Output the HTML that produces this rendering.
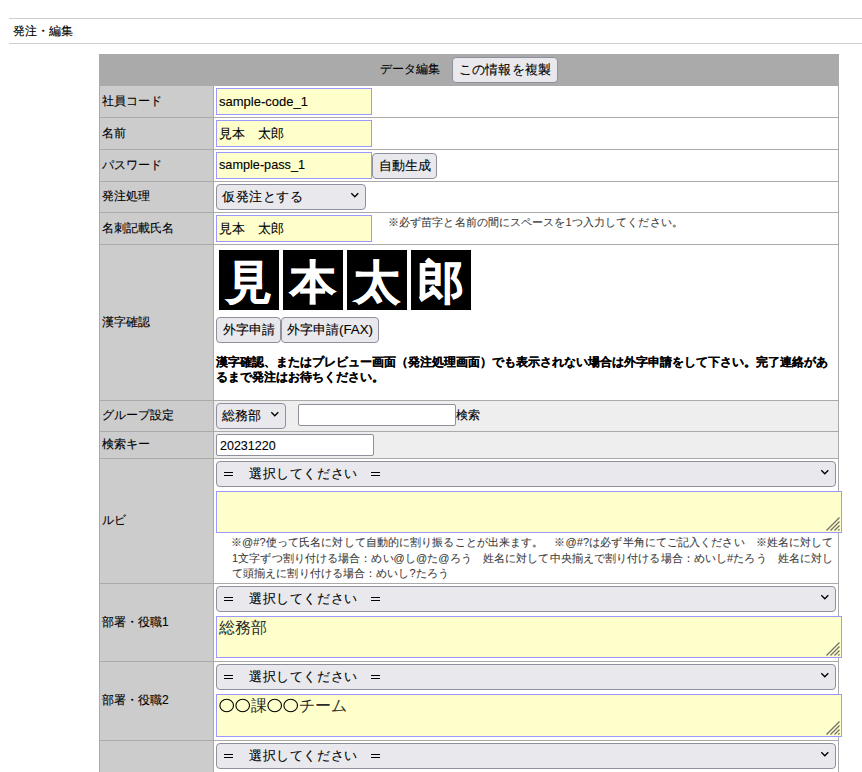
<!DOCTYPE html>
<html lang="ja">
<head>
<meta charset="utf-8">
<style>
html,body{margin:0;padding:0;background:#fff;}
body{width:862px;height:772px;overflow:hidden;position:relative;font-family:"Liberation Sans",sans-serif;color:#000;font-size:12px;-webkit-text-stroke:0.12px currentColor;}
.a{position:absolute;white-space:nowrap;}
.hl{position:absolute;height:1px;background:#cfcfcf;}
.ln{position:absolute;background:#aaa;}
.lab{position:absolute;left:100px;width:113px;background:#ccc;}
.lab span{position:absolute;left:2px;top:calc(50% - 0.75px);transform:translateY(-50%);font-size:12px;line-height:14px;white-space:nowrap;}
.val{position:absolute;left:214px;width:624px;background:#fff;}
.inp{position:absolute;box-sizing:border-box;background:#ffc;border:1px solid #99f;font-size:13.333px;line-height:25px;padding-left:2px;white-space:nowrap;overflow:hidden;}
.btn{position:absolute;box-sizing:border-box;background:#e9e9ed;border:1px solid #8f8f9d;border-radius:4px;font-size:13.333px;line-height:24px;text-align:center;white-space:nowrap;}
.sel{position:absolute;box-sizing:border-box;background:#e9e9ed;border:1px solid #8f8f9d;border-radius:4px;font-size:13.333px;line-height:24px;white-space:nowrap;}
.eq{position:absolute;top:10px;width:9px;height:4px;box-sizing:border-box;border-top:1px solid #000;border-bottom:1px solid #000;}
.sel svg{position:absolute;top:7px;}
.ta{position:absolute;box-sizing:border-box;background:#ffc;border:1px solid #99f;left:216px;width:626px;}
.ta svg{position:absolute;right:1px;bottom:1px;}
.ta span{position:absolute;left:2px;top:1px;font-size:16px;line-height:20px;white-space:nowrap;-webkit-text-stroke:0;color:#2a2a2a;}
.box{position:absolute;top:250px;width:60px;height:60px;background:#000;color:#fff;font-size:46px;line-height:64px;text-align:center;font-weight:bold;overflow:hidden;-webkit-text-stroke:0.7px #fff;}
.note{position:absolute;font-size:11px;letter-spacing:0.1px;color:#3a3a3a;-webkit-text-stroke:0.08px #3a3a3a;white-space:nowrap;}
</style>
</head>
<body>
<!-- page title lines -->
<div class="hl" style="left:9px;top:18px;width:853px;"></div>
<div class="a" style="left:13px;top:23px;font-size:12px;line-height:16px;">発注・編集</div>
<div class="hl" style="left:9px;top:43px;width:853px;"></div>

<!-- table frame -->
<div class="ln" style="left:99px;top:54px;width:740px;height:718px;"></div>
<!-- header -->
<div class="a" style="left:100px;top:55px;width:738px;height:30px;background:#aaa;"></div>
<div class="a" style="left:380px;top:61px;font-size:12px;line-height:16px;">データ編集</div>
<div class="btn" style="left:452px;top:57px;width:106px;height:26px;letter-spacing:0.2px;">この情報を複製</div>

<!-- rows: label + value cells (gaps show border colour) -->
<div class="lab" style="top:86px;height:31px;"><span>社員コード</span></div>
<div class="val" style="top:86px;height:31px;"></div>
<div class="lab" style="top:118px;height:31px;"><span>名前</span></div>
<div class="val" style="top:118px;height:31px;"></div>
<div class="lab" style="top:150px;height:31px;"><span>パスワード</span></div>
<div class="val" style="top:150px;height:31px;"></div>
<div class="lab" style="top:182px;height:30px;"><span>発注処理</span></div>
<div class="val" style="top:182px;height:30px;"></div>
<div class="lab" style="top:213px;height:31px;"><span>名刺記載氏名</span></div>
<div class="val" style="top:213px;height:31px;"></div>
<div class="lab" style="top:245px;height:155px;"><span>漢字確認</span></div>
<div class="val" style="top:245px;height:155px;"></div>
<div class="lab" style="top:401px;height:30px;"><span>グループ設定</span></div>
<div class="val" style="top:401px;height:30px;background:#eee;"></div>
<div class="lab" style="top:432px;height:26px;"><span>検索キー</span></div>
<div class="val" style="top:432px;height:26px;background:#eee;"></div>
<div class="lab" style="top:459px;height:124px;"><span>ルビ</span></div>
<div class="val" style="top:459px;height:124px;"></div>
<div class="lab" style="top:584px;height:77px;"><span>部署・役職1</span></div>
<div class="val" style="top:584px;height:77px;"></div>
<div class="lab" style="top:662px;height:78px;"><span>部署・役職2</span></div>
<div class="val" style="top:662px;height:78px;"></div>
<div class="lab" style="top:741px;height:40px;"></div>
<div class="val" style="top:741px;height:40px;"></div>

<!-- R1 -->
<div class="inp" style="left:216px;top:88px;width:156px;height:27px;font-size:13px;">sample-code_1</div>
<!-- R2 -->
<div class="inp" style="left:216px;top:120px;width:156px;height:27px;">見本　太郎</div>
<!-- R3 -->
<div class="inp" style="left:216px;top:152px;width:156px;height:27px;font-size:12.7px;">sample-pass_1</div>
<div class="btn" style="left:372px;top:153px;width:65px;height:26px;">自動生成</div>
<!-- R4 -->
<div class="sel" style="left:216px;top:184px;width:150px;height:26px;padding-left:5px;"><span style="letter-spacing:0.5px">仮発注とする</span><svg style="left:133px" width="10" height="7" viewBox="0 0 10 7"><path d="M1.3 1.2 L4.8 4.7 L8.3 1.2" fill="none" stroke="#000" stroke-width="1.35"/></svg></div>
<!-- R5 -->
<div class="inp" style="left:216px;top:215px;width:156px;height:27px;">見本　太郎</div>
<div class="note" style="left:388px;top:215px;line-height:14px;">※必ず苗字と名前の間にスペースを1つ入力してください。</div>
<!-- R6 -->
<div class="box" style="left:219px;">見</div>
<div class="box" style="left:283px;">本</div>
<div class="box" style="left:347px;">太</div>
<div class="box" style="left:411px;">郎</div>
<div class="btn" style="left:216px;top:317px;width:65px;height:26px;">外字申請</div>
<div class="btn" style="left:281px;top:317px;width:98px;height:26px;">外字申請(FAX)</div>
<div class="a" style="left:216px;top:355px;font-size:12px;line-height:15px;font-weight:bold;white-space:normal;width:620px;-webkit-text-stroke:0.1px #000;">漢字確認、またはプレビュー画面（発注処理画面）でも表示されない場合は外字申請をして下さい。完了連絡があるまで発注はお待ちください。</div>
<!-- R7 -->
<div class="sel" style="left:216px;top:403px;width:70px;height:26px;padding-left:5px;">総務部<svg style="left:53px" width="10" height="7" viewBox="0 0 10 7"><path d="M1.3 1.2 L4.8 4.7 L8.3 1.2" fill="none" stroke="#000" stroke-width="1.35"/></svg></div>
<div class="a" style="left:298px;top:404px;width:158px;height:22px;box-sizing:border-box;background:#fff;border:1px solid #8f8f9d;border-radius:2px;"></div>
<div class="a" style="left:456px;top:407px;font-size:12px;line-height:16px;">検索</div>
<!-- R8 -->
<div class="a" style="left:216px;top:434px;width:158px;height:22px;box-sizing:border-box;background:#fff;border:1px solid #8f8f9d;border-radius:2px;font-size:12.5px;line-height:22px;padding-left:3px;-webkit-text-stroke:0.1px #000;">20231220</div>
<!-- R9 -->
<div class="sel" style="left:216px;top:461px;width:620px;height:26px;padding-left:7px;"><i class="eq" style="left:7px"></i><span style="position:absolute;left:32px;letter-spacing:0.6px;">選択してください</span><i class="eq" style="left:154px"></i><svg style="left:603px" width="10" height="7" viewBox="0 0 10 7"><path d="M1.3 1.2 L4.8 4.7 L8.3 1.2" fill="none" stroke="#000" stroke-width="1.35"/></svg></div>
<div class="ta" style="top:491px;height:42px;"><svg width="15" height="15" viewBox="0 0 15 15"><path d="M1.5 14.5 L14.5 1.5 M5.5 14.5 L14.5 5.5 M9.5 14.5 L14.5 9.5 M13.2 14.5 L14.5 13.2" stroke="#707066" stroke-width="1.25"/></svg></div>
<div class="note" style="left:231px;top:535px;line-height:15.5px;">※@#?使って氏名に対して自動的に割り振ることが出来ます。　※@#?は必ず半角にてご記入ください　※姓名に対して</div><div class="note" style="left:232px;top:550.5px;line-height:15.5px;">1文字ずつ割り付ける場合：めい@し@た@ろう　姓名に対して中央揃えで割り付ける場合：めいし#たろう　姓名に対し</div><div class="note" style="left:232px;top:566px;line-height:15.5px;">て頭揃えに割り付ける場合：めいし?たろう</div>
<!-- R10 -->
<div class="sel" style="left:216px;top:586px;width:620px;height:26px;padding-left:7px;"><i class="eq" style="left:7px"></i><span style="position:absolute;left:32px;letter-spacing:0.6px;">選択してください</span><i class="eq" style="left:154px"></i><svg style="left:603px" width="10" height="7" viewBox="0 0 10 7"><path d="M1.3 1.2 L4.8 4.7 L8.3 1.2" fill="none" stroke="#000" stroke-width="1.35"/></svg></div>
<div class="ta" style="top:616px;height:42px;"><span>総務部</span><svg width="15" height="15" viewBox="0 0 15 15"><path d="M1.5 14.5 L14.5 1.5 M5.5 14.5 L14.5 5.5 M9.5 14.5 L14.5 9.5 M13.2 14.5 L14.5 13.2" stroke="#707066" stroke-width="1.25"/></svg></div>
<!-- R11 -->
<div class="sel" style="left:216px;top:664px;width:620px;height:26px;padding-left:7px;"><i class="eq" style="left:7px"></i><span style="position:absolute;left:32px;letter-spacing:0.6px;">選択してください</span><i class="eq" style="left:154px"></i><svg style="left:603px" width="10" height="7" viewBox="0 0 10 7"><path d="M1.3 1.2 L4.8 4.7 L8.3 1.2" fill="none" stroke="#000" stroke-width="1.35"/></svg></div>
<div class="ta" style="top:694px;height:43px;"><span><i style="font-style:normal;color:transparent;-webkit-text-stroke:0;">〇〇</i>課<i style="font-style:normal;color:transparent;-webkit-text-stroke:0;">〇〇</i>チーム</span><svg style="position:absolute;left:0.3px;top:-1.2px;" width="90" height="24" viewBox="0 0 90 24"><ellipse cx="9.7" cy="11.5" rx="6.8" ry="6.3" fill="none" stroke="#000" stroke-width="1.1"/><ellipse cx="25.7" cy="11.5" rx="6.8" ry="6.3" fill="none" stroke="#000" stroke-width="1.1"/><ellipse cx="57.7" cy="11.5" rx="6.8" ry="6.3" fill="none" stroke="#000" stroke-width="1.1"/><ellipse cx="73.7" cy="11.5" rx="6.8" ry="6.3" fill="none" stroke="#000" stroke-width="1.1"/></svg><svg width="15" height="15" viewBox="0 0 15 15"><path d="M1.5 14.5 L14.5 1.5 M5.5 14.5 L14.5 5.5 M9.5 14.5 L14.5 9.5 M13.2 14.5 L14.5 13.2" stroke="#707066" stroke-width="1.25"/></svg></div>
<!-- R12 -->
<div class="sel" style="left:216px;top:743px;width:620px;height:26px;padding-left:7px;"><i class="eq" style="left:7px"></i><span style="position:absolute;left:32px;letter-spacing:0.6px;">選択してください</span><i class="eq" style="left:154px"></i><svg style="left:603px" width="10" height="7" viewBox="0 0 10 7"><path d="M1.3 1.2 L4.8 4.7 L8.3 1.2" fill="none" stroke="#000" stroke-width="1.35"/></svg></div>
</body>
</html>
